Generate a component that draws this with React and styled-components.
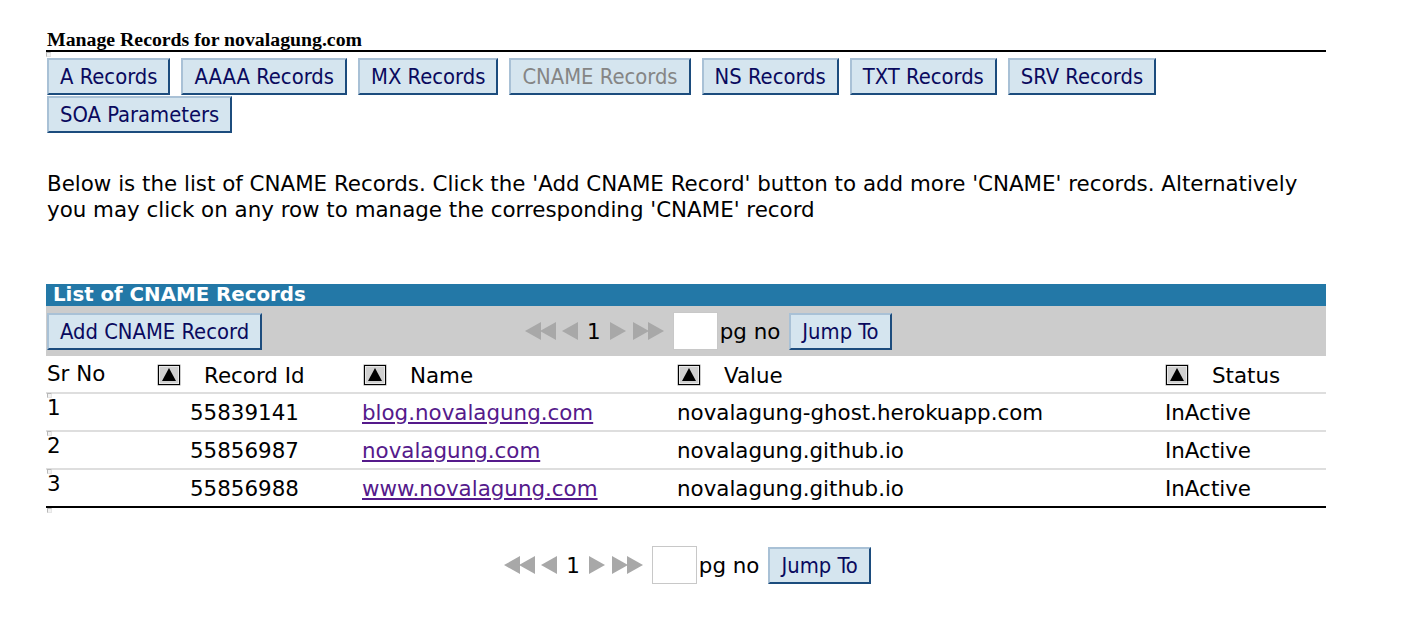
import React from "react";
import styled, { createGlobalStyle } from "styled-components";

const Global = createGlobalStyle`
  html, body { margin: 0; padding: 0; background: #fff; }
  body { font-family: "DejaVu Sans", Verdana, sans-serif; color: #000; }
`;

const Page = styled.div`
  width: 1280px;
  padding: 28px 0 40px 46px;
`;

const Title = styled.div`
  font-family: "Liberation Serif", "Times New Roman", serif;
  font-weight: bold;
  font-size: 19.8px;
  line-height: 22px;
  padding-left: 1px;
  border-bottom: 2px solid #000;
`;

const Broken = styled.span`
  display: block;
  width: 5px;
  height: 5px;
  border: 1px solid #b8b8b8;
  border-right-color: #e6e6e6;
  border-bottom-color: #e6e6e6;
  background: #f2f2f2;
  box-sizing: border-box;
`;

const Tabs = styled.div`
  display: flex;
  flex-wrap: wrap;
  column-gap: 11px;
  row-gap: 1px;
  padding-left: 1px;
  padding-top: 1px;
  width: 1180px;
`;

const Btn = styled.button`
  box-sizing: border-box;
  height: 37px;
  padding: 0 11px;
  background: #d5e5ef;
  border-style: solid;
  border-width: 2px;
  border-color: #a9c1d6 #1c4c7d #1c4c7d #a9c1d6;
  font-family: "DejaVu Sans Condensed", Tahoma, sans-serif;
  font-size: 21.8px;
  color: ${(p) => (p.$disabled ? "#858585" : "#0a0a5e")};
  cursor: pointer;
`;

const Intro = styled.p`
  margin: 38px 0 0 1px;
  font-size: 21.4px;
  line-height: 26px;
  width: 1270px;
`;

const Panel = styled.div`
  margin-top: 61px;
  width: 1280px;
`;

const PanelHead = styled.div`
  background: #2378a7;
  color: #fff;
  font-weight: bold;
  font-size: 19.8px;
  line-height: 22px;
  padding-left: 7px;
`;

const Toolbar = styled.div`
  background: #cccccc;
  height: 50px;
  display: flex;
  align-items: center;
  padding-left: 1px;
`;

const Pager = styled.div`
  display: flex;
  align-items: center;
  margin-left: ${(p) => p.$offset}px;
  font-size: 21.4px;
`;

const PageNum = styled.span`
  margin: 0 8px 0 8px;
`;

const PageInput = styled.input`
  box-sizing: border-box;
  width: 45px;
  height: 38px;
  border: 1px solid #c8c8c8;
  background: #fff;
  margin: 0 2px 0 8px;
`;

const PgLabel = styled.span`
  margin-right: 9px;
`;

const Grid = styled.div`
  display: grid;
  grid-template-columns: 109px 207px 315px 488px 161px;
  border-bottom: 2px solid #000;
`;

const HeadCell = styled.div`
  height: 34px;
  display: flex;
  align-items: center;
  gap: 23px;
  padding-top: 2px;
  padding-left: ${(p) => p.$pl || 0}px;
  font-size: 21.4px;
  border-bottom: 2px solid #dedede;
`;

const FirstHead = styled(HeadCell)`
  padding-left: 1px;
  align-items: flex-start;
  padding-top: 5px;
  height: 31px;
`;

const Cell = styled.div`
  height: 36px;
  display: flex;
  align-items: center;
  padding-left: ${(p) => p.$pl || 0}px;
  font-size: 21.4px;
  border-bottom: ${(p) => (p.$last ? "none" : "2px solid #dedede")};
`;

const IndexCell = styled(Cell)`
  position: relative;
  align-items: flex-start;
  padding-top: 1px;
  height: 35px;
  padding-left: 1px;
  &::before {
    content: "";
    position: absolute;
    left: 1px;
    top: -1px;
    width: 5px;
    height: 5px;
    box-sizing: border-box;
    border: 1px solid #b8b8b8;
    border-right-color: #e6e6e6;
    border-bottom-color: #e6e6e6;
    background: #f2f2f2;
  }
`;

const Link = styled.a`
  color: #551a8b;
  text-decoration: underline;
`;

const TrailIcon = styled(Broken)`
  margin: 0 0 0 1px;
`;

const Bottom = styled.div`
  display: flex;
  justify-content: center;
  padding-top: 33px;
  padding-left: 3px;
`;

const Spacer = styled.span`
  width: ${(p) => p.$w}px;
`;

const SortIcon = () => (
  <svg width="24" height="22" viewBox="0 0 24 22">
    <rect x="0.5" y="0.5" width="23" height="21" fill="#9a9a9a" />
    <rect x="1.5" y="1.5" width="21" height="19" fill="#e8e8e8" stroke="#000" strokeWidth="1" />
    <rect x="3" y="3" width="18" height="16" fill="#d0d0d0" />
    <polygon points="12,4 19,17 5,17" fill="#000" />
  </svg>
);

const Tri = ({ dir, double }) => {
  const one = (x) =>
    dir === "left"
      ? `${x + 16},1 ${x + 16},19 ${x},10`
      : `${x},1 ${x},19 ${x + 16},10`;
  return (
    <svg width={double ? 32 : 18} height="20" viewBox={`0 0 ${double ? 32 : 18} 20`}>
      {double ? (
        <>
          <polygon points={one(0)} fill="#a8a8a8" />
          <polygon points={one(15)} fill="#a8a8a8" />
        </>
      ) : (
        <polygon points={one(1)} fill="#a8a8a8" />
      )}
    </svg>
  );
};

const Pagination = ({ offset }) => (
  <Pager $offset={offset}>
    <Tri dir="left" double />
    <Spacer $w={4} />
    <Tri dir="left" />
    <PageNum>1</PageNum>
    <Tri dir="right" />
    <Spacer $w={6} />
    <Tri dir="right" double />
    <PageInput />
    <PgLabel>pg no</PgLabel>
    <Btn>Jump To</Btn>
  </Pager>
);

const tabs = [
  "A Records",
  "AAAA Records",
  "MX Records",
  "CNAME Records",
  "NS Records",
  "TXT Records",
  "SRV Records",
  "SOA Parameters",
];

const rows = [
  ["1", "55839141", "blog.novalagung.com", "novalagung-ghost.herokuapp.com", "InActive"],
  ["2", "55856987", "novalagung.com", "novalagung.github.io", "InActive"],
  ["3", "55856988", "www.novalagung.com", "novalagung.github.io", "InActive"],
];

export default function App() {
  return (
    <Page>
      <Global />
      <Title>Manage Records for novalagung.com</Title>
      <Broken />
      <Tabs>
        {tabs.map((t) => (
          <Btn key={t} $disabled={t === "CNAME Records"}>
            {t}
          </Btn>
        ))}
      </Tabs>
      <Intro>
        Below is the list of CNAME Records. Click the 'Add CNAME Record' button to add more
        'CNAME' records. Alternatively you may click on any row to manage the corresponding
        'CNAME' record
      </Intro>
      <Panel>
        <PanelHead>List of CNAME Records</PanelHead>
        <Toolbar>
          <Btn>Add CNAME Record</Btn>
          <Pagination offset={263} />
        </Toolbar>
        <Grid>
          <FirstHead>Sr No</FirstHead>
          <HeadCell $pl={2}>
            <SortIcon />
            Record Id
          </HeadCell>
          <HeadCell $pl={1}>
            <SortIcon />
            Name
          </HeadCell>
          <HeadCell $pl={0}>
            <SortIcon />
            Value
          </HeadCell>
          <HeadCell $pl={0}>
            <SortIcon />
            Status
          </HeadCell>
          {rows.map((r, i) => {
            const last = i === rows.length - 1;
            return (
              <React.Fragment key={r[0]}>
                <IndexCell $last={last}>{r[0]}</IndexCell>
                <Cell $pl={35} $last={last}>{r[1]}</Cell>
                <Cell $last={last}>
                  <Link href="#">{r[2]}</Link>
                </Cell>
                <Cell $last={last}>{r[3]}</Cell>
                <Cell $last={last}>{r[4]}</Cell>
              </React.Fragment>
            );
          })}
        </Grid>
        <TrailIcon />
        <Bottom>
          <Pagination offset={0} />
        </Bottom>
      </Panel>
    </Page>
  );
}
